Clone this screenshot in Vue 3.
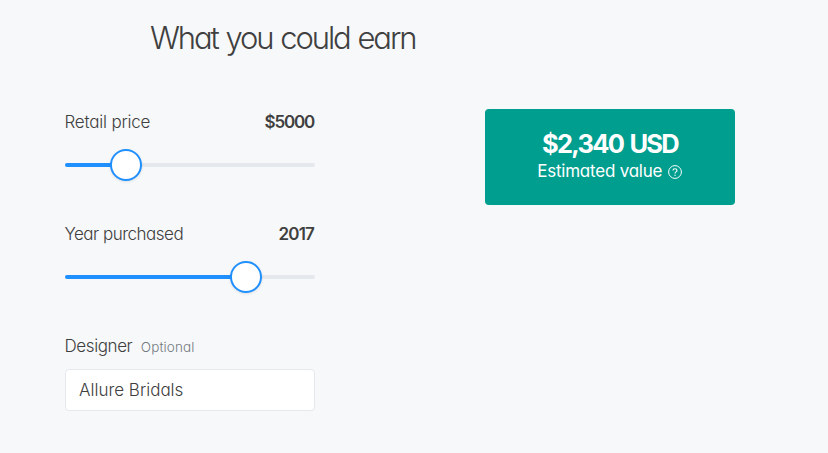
<script setup>
import { ref, computed } from 'vue'

const price = ref(5000)
const year = ref(2017)
const designer = ref('Allure Bridals')

const sliders = computed(() => [
  { id: 'price', label: 'Retail price', value: '$' + price.value, percent: 24.4 },
  { id: 'year', label: 'Year purchased', value: year.value, percent: 72.4 }
])
</script>

<template>
  <div class="calculator">
    <h1 class="title">What you could earn</h1>
    <div class="content">
      <div class="fields">
        <div v-for="item in sliders" :key="item.id" :class="['field', item.id]">
          <div class="field-head">
            <span class="label">{{ item.label }}</span>
            <span class="value">{{ item.value }}</span>
          </div>
          <div class="slider">
            <div class="track">
              <div class="fill" :style="{ width: item.percent + '%' }"></div>
            </div>
            <div class="thumb" :style="{ left: item.percent + '%' }"></div>
          </div>
        </div>
        <div class="designer-field">
          <label class="designer-head" for="designer">
            <span class="label">Designer</span>
            <span class="optional">Optional</span>
          </label>
          <input id="designer" v-model="designer" type="text">
        </div>
      </div>
      <div class="estimate">
        <div class="amount">$2,340 USD</div>
        <div class="caption">
          <span class="caption-text">Estimated value</span>
          <svg width="14" height="14" viewBox="0 0 14 14" fill="none" stroke="#fff">
            <circle cx="7" cy="7" r="6.4" stroke-width="1" />
            <path d="M5 5.6C5 4.4 5.8 3.7 7 3.7s2 .7 2 1.7c0 1.5-2 1.4-2 3" stroke-width="1.1" />
            <circle cx="7" cy="10.2" r=".7" fill="#fff" stroke="none" />
          </svg>
        </div>
      </div>
    </div>
  </div>
</template>

<style>
body {
  background: #f7f8fa;
}
</style>

<style scoped>
.calculator {
  box-sizing: border-box;
  height: 453px;
  padding: 18px 93px 0 65px;
  background: #f7f8fa;
  color: #404040;
  font-family: Inter, "Liberation Sans", sans-serif;
  /* single-storey a */
  font-feature-settings: "cv11";
  white-space: nowrap;
}

.title {
  margin: 0 0 0 85px;
  font-size: 31px;
  font-weight: 300;
  line-height: 40px;
  letter-spacing: -2.1px;
  word-spacing: 1.2px;
}

.content {
  display: flex;
  justify-content: space-between;
  align-items: flex-start;
  margin-top: 51px;
}

.fields {
  width: 250px;
}

.field {
  height: 112px;
}

.field-head {
  display: flex;
  justify-content: space-between;
  line-height: 26px;
}

.label {
  margin-left: -0.5px;
  font-size: 17px;
  font-weight: 300;
  letter-spacing: -0.4px;
}

.price .label {
  letter-spacing: -0.2px;
}

.year .label {
  letter-spacing: -0.5px;
}

.value {
  margin-right: 1px;
  font-size: 17px;
  font-weight: 600;
  letter-spacing: -1.2px;
}

.year .value {
  letter-spacing: -0.85px;
}

.slider {
  position: relative;
  height: 32px;
  margin-top: 14px;
  display: flex;
  align-items: center;
}

.track {
  width: 100%;
  height: 4px;
  border-radius: 2px;
  background: #e5e8ed;
  overflow: hidden;
}

.fill {
  height: 100%;
  background: #2190ff;
}

.thumb {
  position: absolute;
  top: 0;
  box-sizing: border-box;
  width: 32px;
  height: 32px;
  margin-left: -16px;
  border: 2px solid #2190ff;
  border-radius: 50%;
  background: #fff;
  box-shadow: 0 1px 3px rgba(0, 0, 0, 0.1);
}

.designer-head {
  display: flex;
  align-items: baseline;
  line-height: 26px;
}

.optional {
  margin-left: 8.5px;
  color: #737a80;
  font-size: 13.5px;
  font-weight: 300;
  letter-spacing: 0.1px;
}

input {
  display: block;
  box-sizing: border-box;
  width: 250px;
  height: 42px;
  margin-top: 9px;
  padding: 0 13px;
  border: 1px solid #e5e8ed;
  border-radius: 4px;
  background: #fff;
  color: #404040;
  font: inherit;
  font-feature-settings: "cv11";
  font-size: 17px;
  font-weight: 300;
  letter-spacing: 0;
  outline: none;
}

.estimate {
  box-sizing: border-box;
  width: 250px;
  height: 96px;
  padding-top: 19px;
  border-radius: 4px;
  background: #009e8e;
  color: #fff;
  display: flex;
  flex-direction: column;
  align-items: center;
}

.amount {
  font-size: 25.5px;
  font-weight: 700;
  line-height: 32px;
  letter-spacing: -1.75px;
  word-spacing: 2px;
}

.caption {
  display: flex;
  align-items: center;
  gap: 5.5px;
  margin-right: 1px;
  line-height: 23px;
  font-size: 17px;
  font-weight: 400;
  letter-spacing: -0.22px;
}
</style>
